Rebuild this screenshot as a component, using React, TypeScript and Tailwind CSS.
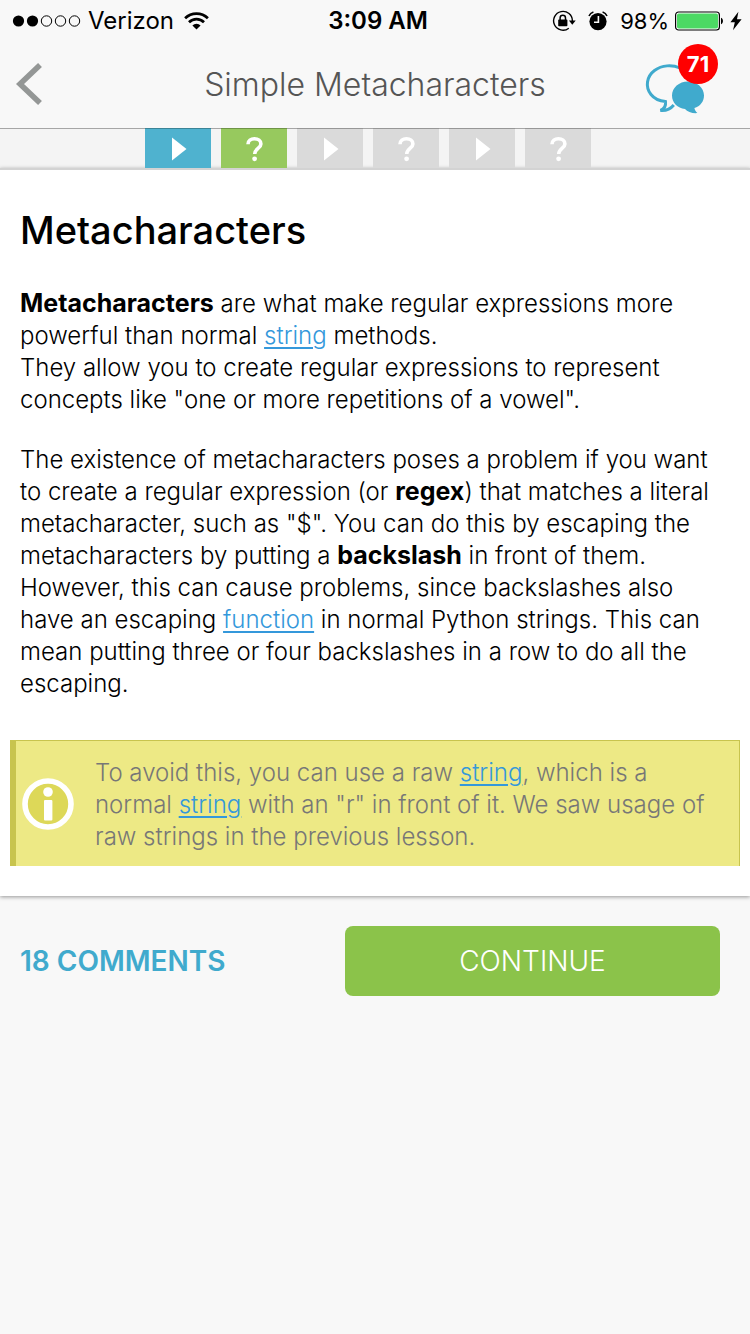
import type { ReactNode } from "react";

type Step = { kind: "video" | "quiz"; state: "current" | "done" | "locked" };

const steps: Step[] = [
  { kind: "video", state: "current" },
  { kind: "quiz", state: "done" },
  { kind: "video", state: "locked" },
  { kind: "quiz", state: "locked" },
  { kind: "video", state: "locked" },
  { kind: "quiz", state: "locked" },
];

const stepColors = {
  current: "bg-[#4fb2cf] border-[#3b8497]",
  done: "bg-[#97c95e] border-[#6f9447]",
  locked: "bg-[#dadada] border-[#979797]",
};

function TermLink({ children }: { children: ReactNode }) {
  return (
    <a href="#" className="text-[#3498db] underline decoration-2 underline-offset-3">
      {children}
    </a>
  );
}

function Strong({ children }: { children: ReactNode }) {
  return <strong className="text-[25px] leading-none font-bold">{children}</strong>;
}

function StatusBar() {
  return (
    <div className="grid h-10 grid-cols-[1fr_auto_1fr] items-center pt-px text-2xl/6 text-black">
      <div className="flex items-center pl-3">
        <svg className="h-4 w-[70px]" viewBox="0 0 70 16" aria-hidden="true">
          <circle cx="6.5" cy="8" r="5.6" />
          <circle cx="20.5" cy="8" r="5.6" />
          <g fill="none" stroke="#000" strokeWidth="1">
            <circle cx="34.5" cy="8" r="5.2" />
            <circle cx="48.5" cy="8" r="5.2" />
            <circle cx="62.5" cy="8" r="5.2" />
          </g>
        </svg>
        <span className="ml-1.5">Verizon</span>
        <svg className="ml-2.5 h-[18px] w-[25px]" viewBox="0 0 25 18" aria-hidden="true">
          <g fill="none" stroke="#000" strokeWidth="2.7">
            <path d="M1.1 6.3a16.2 16.2 0 0 1 22.8 0" />
            <path d="M5 10.2a10.6 10.6 0 0 1 15 0" />
          </g>
          <path d="M12.5 17.6 8.4 13.4a5.8 5.8 0 0 1 8.2 0z" />
        </svg>
      </div>
      <span className="pl-1.5 font-semibold">3:09 AM</span>
      <div className="flex items-center justify-end pr-2">
        <svg className="h-[22px] w-6" viewBox="0 0 24 22" aria-hidden="true">
          <path d="M16.8 18.2A9.4 9.4 0 1 1 20.4 11" fill="none" stroke="#000" strokeWidth="1.4" />
          <path d="M16.9 10.6h6.8l-3.4 4.2z" />
          <rect x="6.2" y="9.6" width="9.2" height="6.6" rx="0.8" />
          <path d="M8.1 10V8a2.7 2.7 0 0 1 5.4 0v2" fill="none" stroke="#000" strokeWidth="1.5" />
        </svg>
        <svg className="ml-3 h-5 w-5" viewBox="0 0 20 20" aria-hidden="true">
          <circle cx="10" cy="10.6" r="8.6" />
          <path d="M1 5a7 7 0 0 1 4.4-4M19 5a7 7 0 0 0-4.4-4" fill="none" stroke="#000" strokeWidth="1.6" />
          <path d="M10.4 5v6.2H6" fill="none" stroke="#f8f8f8" strokeWidth="1.6" />
        </svg>
        <span className="ml-3 text-[22px]">98%</span>
        <svg className="ml-1.5 h-5 w-[49px]" viewBox="0 0 49 20" aria-hidden="true">
          <rect x="0.6" y="1" width="43.8" height="18" rx="3" fill="#fff" stroke="#000" strokeWidth="1.2" />
          <rect x="2" y="2.4" width="41" height="15.2" rx="1.8" fill="#4cd964" />
          <path d="M46 6.8c2.6.6 2.6 5.8 0 6.4z" />
        </svg>
        <svg className="ml-1.5 h-5 w-3" viewBox="0 0 12 20" aria-hidden="true">
          <path d="M8.4.8.4 11.2h4.4L3 19.2l8.6-11H7z" />
        </svg>
      </div>
    </div>
  );
}

function NavBar() {
  return (
    <header className="grid h-[88px] grid-cols-[1fr_auto_1fr] items-center">
      <button type="button" aria-label="Back" className="ml-4 w-fit">
        <svg className="h-11 w-7" viewBox="0 0 28 44" aria-hidden="true">
          <path d="M24 3 4 22l20 19" fill="none" stroke="#949796" strokeWidth="5.6" />
        </svg>
      </button>
      <h1 className="pt-0.5 text-[32px]/10 font-light text-[#555]">Simple Metacharacters</h1>
      <button
        type="button"
        aria-label="Discussions, 71 new"
        className="relative mt-1 mr-8 h-[72px] w-[74px] self-start justify-self-end"
      >
        <svg className="h-[72px] w-[74px]" viewBox="0 0 74 72" aria-hidden="true">
          <path
            d="M36 24C28 20.5 18 21 10.5 26.5C2.5 32.5 1 43 7 50.5C10 54.3 15 57 21.5 57.6C22 61.5 20 65 16.5 66.5C21.5 67 26.500 65 29.8 61"
            fill="none"
            stroke="#40aacd"
            strokeWidth="3"
          />
          <path
            d="M44 37.5c9 0 16 6.3 16 14 0 6-3.8 10.8-9.600 12.600.4 2 1.400 3.700 3 5-5.400.4-10-1.400-12.400-4.200C33.500 64.300 28 58.800 28 51.500c0-7.700 7-14 16-14z"
            fill="#40aacd"
          />
        </svg>
        <span className="absolute top-0 right-0 flex size-10 items-center justify-center rounded-full bg-[#ff0000] text-[22px] font-bold text-white">
          71
        </span>
      </button>
    </header>
  );
}

function StepStrip() {
  return (
    <nav
      aria-label="Lesson steps"
      className="flex h-10 justify-center gap-2.5 border-t border-[#a6a6a6] bg-[#f4f4f4] pr-3.5"
    >
      {steps.map((step, i) => (
        <button
          key={i}
          type="button"
          aria-label={`Step ${i + 1}: ${step.kind}`}
          className={`-mt-px flex w-[66px] items-center justify-center border-t ${stepColors[step.state]}`}
        >
          <svg className="h-7 w-6" viewBox="0 0 24 28" aria-hidden="true">
            {step.kind === "video" ? (
              <path d="M6 2.5 20.5 14 6 25.5z" fill="#fff" />
            ) : (
              <g>
                <path
                  d="M6 9.2C6 5.400 8.900 3.800 12.400 3.800C16.200 3.800 18.900 5.800 18.900 8.900C18.900 13.200 13 13 12.700 19"
                  fill="none"
                  stroke="#fff"
                  strokeWidth="3.6"
                />
                <circle cx="12.6" cy="23.8" r="2.4" fill="#fff" />
              </g>
            )}
          </svg>
        </button>
      ))}
    </nav>
  );
}

export default function App() {
  return (
    <div className="min-h-screen bg-[#f8f8f8] font-['Inter','Liberation_Sans',sans-serif]">
      <StatusBar />
      <NavBar />
      <StepStrip />
      <main>
        <article className="border-t-2 border-[#d3d3d3] bg-white px-2.5 pb-[30px] text-2xl/8 font-light text-black shadow-[0_1px_4px_rgba(0,0,0,0.4)]">
          <h2 className="px-2.5 pt-[34px] text-[38px]/[52px] font-medium">Metacharacters</h2>
          <p className="mt-8 px-2.5">
            <Strong>Metacharacters</Strong> are what make regular expressions more powerful than normal{" "}
            <TermLink>string</TermLink> methods.
            <br />
            They allow you to create regular expressions to represent concepts like "one or more repetitions of a
            vowel".
          </p>
          <p className="mt-7 px-2.5">
            The existence of metacharacters poses a problem if you want to create a regular expression (or{" "}
            <Strong>regex</Strong>) that matches a literal metacharacter, such as "$". You can do this by escaping the
            metacharacters by putting a <Strong>backslash</Strong> in front of them. However, this can cause problems,
            since backslashes also have an escaping <TermLink>function</TermLink> in normal Python strings. This can
            mean putting three or four backslashes in a row to do all the escaping.
          </p>
          <aside className="mt-10 flex items-center gap-5 border-t border-r border-l-6 border-[#c8c44e] bg-[#ede985] pt-4 pr-5 pb-[13px] pl-[5px] text-[#777]">
            <svg className="size-[54px] shrink-0" viewBox="0 0 54 54" aria-hidden="true">
              <circle cx="27" cy="26" r="23" fill="#ddd858" stroke="#fff" strokeWidth="5.6" />
              <circle cx="27" cy="14" r="4.8" fill="#fff" />
              <rect x="23" y="22" width="8.4" height="20.5" rx="1" fill="#fff" />
            </svg>
            <p>
              To avoid this, you can use a raw <TermLink>string</TermLink>, which is a normal{" "}
              <TermLink>string</TermLink> with an "r" in front of it. We saw usage of raw strings in the previous
              lesson.
            </p>
          </aside>
        </article>
        <footer className="flex items-center justify-between py-[30px] pr-[30px] pl-5">
          <a href="#" className="text-[28px]/9 font-semibold text-[#40aacd]">
            18 COMMENTS
          </a>
          <button
            type="button"
            className="h-[70px] w-3/5 max-w-[375px] rounded-lg bg-[#8bc34a] text-[28px] font-light text-white"
          >
            CONTINUE
          </button>
        </footer>
      </main>
    </div>
  );
}
